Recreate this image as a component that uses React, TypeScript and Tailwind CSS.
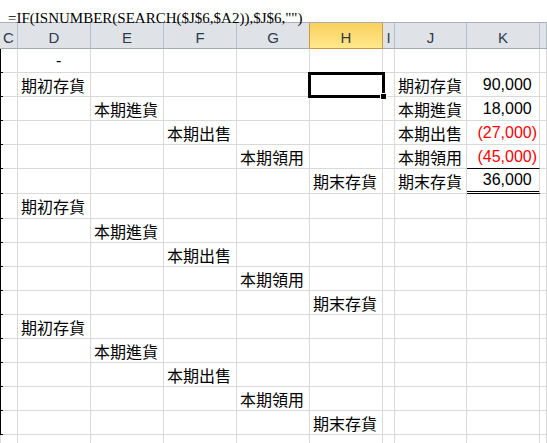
import React from 'react';

type Col = 'C' | 'D' | 'E' | 'F' | 'G' | 'H' | 'I' | 'J' | 'K' | 'L';

// column widths include the right gridline
const columns: { key: Col; w: string }[] = [
  { key: 'C', w: 'w-[18px]' },
  { key: 'D', w: 'w-[73px]' },
  { key: 'E', w: 'w-[73px]' },
  { key: 'F', w: 'w-[73px]' },
  { key: 'G', w: 'w-[73px]' },
  { key: 'H', w: 'w-[73px]' },
  { key: 'I', w: 'w-[12px]' },
  { key: 'J', w: 'w-[72px]' },
  { key: 'K', w: 'w-[73px]' },
  { key: 'L', w: 'flex-1' },
];

type Row = {
  h: string;
  label?: { col: Col; text: string };
  summary?: { name: string; value: string; negative?: boolean; edge?: 'single' | 'double' };
  dash?: boolean;
  lastRow?: boolean;
};

const rows: Row[] = [
  { h: 'h-[24px]', dash: true },
  { h: 'h-[24px]', label: { col: 'D', text: '期初存貨' }, summary: { name: '期初存貨', value: '90,000' } },
  { h: 'h-[24px]', label: { col: 'E', text: '本期進貨' }, summary: { name: '本期進貨', value: '18,000' } },
  { h: 'h-[24px]', label: { col: 'F', text: '本期出售' }, summary: { name: '本期出售', value: '(27,000)', negative: true } },
  { h: 'h-[24px]', label: { col: 'G', text: '本期領用' }, summary: { name: '本期領用', value: '(45,000)', negative: true, edge: 'single' } },
  { h: 'h-[25px]', label: { col: 'H', text: '期末存貨' }, summary: { name: '期末存貨', value: '36,000', edge: 'double' } },
  { h: 'h-[25px]', label: { col: 'D', text: '期初存貨' } },
  { h: 'h-[24px]', label: { col: 'E', text: '本期進貨' } },
  { h: 'h-[24px]', label: { col: 'F', text: '本期出售' } },
  { h: 'h-[24px]', label: { col: 'G', text: '本期領用' } },
  { h: 'h-[24px]', label: { col: 'H', text: '期末存貨' } },
  { h: 'h-[24px]', label: { col: 'D', text: '期初存貨' } },
  { h: 'h-[24px]', label: { col: 'E', text: '本期進貨' } },
  { h: 'h-[24px]', label: { col: 'F', text: '本期出售' } },
  { h: 'h-[24px]', label: { col: 'G', text: '本期領用' } },
  { h: 'h-[24px]', label: { col: 'H', text: '期末存貨' } },
  { h: 'h-[24px]', lastRow: true },
];

const cjk = "font-['Noto_Sans_CJK_TC','Noto_Sans_CJK_SC',sans-serif]";
const num = "font-['Liberation_Sans',Arial,sans-serif]";

const HeaderRow: React.FC = () => (
  <div className="flex h-[26px] bg-[#dfe3e8]">
    {columns.map((c) => {
      const active = c.key === 'H';
      const beforeActive = c.key === 'G';
      return (
        <div
          key={c.key}
          className={`${c.w} flex items-center justify-center pt-[4px] border-b border-r leading-none text-[15px] ${num} ${
            active
              ? 'bg-gradient-to-b from-[#f9d15a] to-[#ffe88c] border-b-[#cf9a3e] border-r-[#cf9a3e] text-[#3a3a3a]'
              : beforeActive
              ? 'border-b-[#a3abb5] border-r-[#cf9a3e] text-[#2d3a4b]'
              : 'border-b-[#a3abb5] border-r-[#b8c0ca] text-[#2d3a4b]'
          }`}
        >
          {c.key !== 'L' ? c.key : ''}
        </div>
      );
    })}
  </div>
);

const RowEdge: React.FC<{ black: boolean }> = ({ black }) => (
  <div
    className={`w-[18px] flex flex-col border-l border-r border-r-[#d9d9d9] ${
      black ? 'border-l-black' : 'border-l-[#d9d9d9]'
    }`}
  >
    <div className="flex-1" />
    <div className="h-px flex">
      <div className={`w-[2px] ${black ? 'bg-black' : 'bg-[#d9d9d9]'}`} />
      <div className="flex-1 bg-[#d9d9d9]" />
    </div>
  </div>
);

const SheetRow: React.FC<{ row: Row; index: number }> = ({ row, index }) => (
  <div className={`flex ${row.h}`}>
    <RowEdge black={!row.lastRow} />
    {columns.slice(1).map((c) => {
      let bottom = 'border-b border-b-[#d9d9d9]';
      let content: React.ReactNode = null;
      let align = 'justify-start pl-[3px]';

      if (row.dash && c.key === 'D') {
        content = <span className={`${num} text-[16px] leading-none`}>-</span>;
        align = 'justify-start pl-[38px]';
      }
      if (row.label && row.label.col === c.key) {
        content = <span className={`${cjk} text-[16px] leading-none text-black`}>{row.label.text}</span>;
      }
      if (row.summary && c.key === 'J') {
        content = <span className={`${cjk} text-[16px] leading-none text-black`}>{row.summary.name}</span>;
      }
      if (row.summary && c.key === 'K') {
        const s = row.summary;
        align = 'justify-end pr-[2px]';
        content = (
          <span className={`${num} text-[16px] leading-none ${s.negative ? 'text-[#ff0000]' : 'text-black'}`}>
            {s.value}
            {!s.negative && <span className="invisible">)</span>}
          </span>
        );
        if (s.edge === 'single') bottom = 'border-b border-b-black';
        if (s.edge === 'double') bottom = 'border-b-[3px] border-double border-b-black';
      }

      const selected = index === 1 && c.key === 'H';

      return (
        <div
          key={c.key}
          className={`${c.w} relative flex items-center whitespace-nowrap border-r border-r-[#d9d9d9] ${bottom} ${align}`}
        >
          {content}
          {selected && (
            <div className="absolute left-[-2px] top-[-1px] w-[77px] h-[26px] border-[3px] border-black z-10">
              <div className="absolute right-[-5px] bottom-[-5px] w-[7px] h-[7px] bg-black border border-white" />
            </div>
          )}
        </div>
      );
    })}
  </div>
);

export default function App() {
  return (
    <div className="w-[547px] h-[443px] overflow-hidden bg-white">
      {/* formula bar */}
      <div className="h-[23px] border-b border-[#a9b0b9] pl-[8px] pt-[5px] bg-white">
        <span className="font-['Liberation_Serif','Times_New_Roman',serif] text-[15px] leading-[17px] text-black whitespace-nowrap">
          {'=IF(ISNUMBER(SEARCH($J$6,$A2)),$J$6,"")'}
        </span>
      </div>

      <HeaderRow />

      {rows.map((row, i) => (
        <SheetRow key={i} row={row} index={i} />
      ))}
    </div>
  );
}
